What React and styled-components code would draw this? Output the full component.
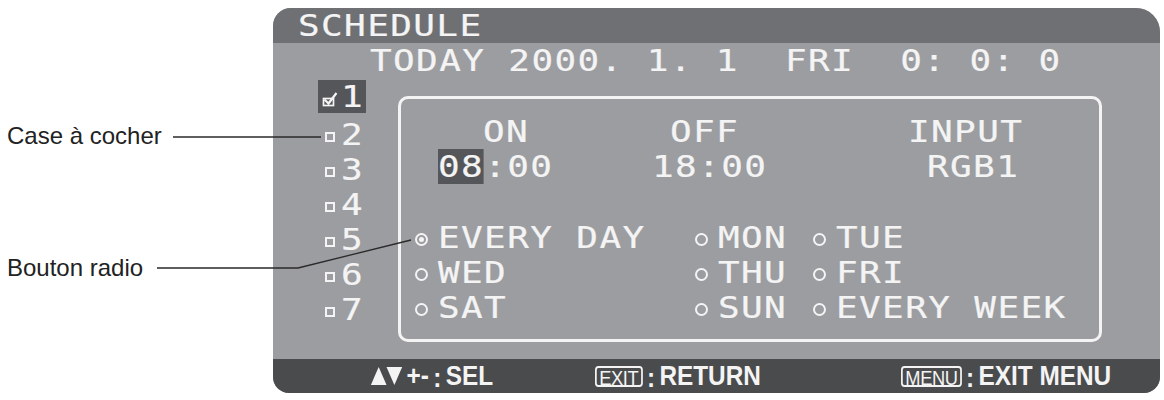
import React from "react";
import styled, { createGlobalStyle } from "styled-components";

const GlobalStyle = createGlobalStyle`
  html, body {
    margin: 0;
    padding: 0;
    background: #ffffff;
  }
  body {
    font-family: "Liberation Sans", Arial, sans-serif;
  }
`;

const osd = {
  header: "#6f7074",
  body: "#9c9da1",
  footer: "#4a4b4d",
  mark: "#55565a",
  ink: "#f4f4f4",
};

const Page = styled.div`
  position: relative;
  display: flex;
  width: 1164px;
  height: 400px;
  padding-top: 8px;
  box-sizing: border-box;
  background: #ffffff;
`;

const Callouts = styled.div`
  width: 273px;
  flex-shrink: 0;
  display: flex;
  flex-direction: column;
  padding-left: 7px;
  box-sizing: border-box;
`;

const Label = styled.div`
  margin-top: ${(p) => p.top}px;
  font-size: 24px;
  line-height: 28px;
  color: #222222;
`;

const Leaders = styled.svg`
  position: absolute;
  left: 0;
  top: 0;
  pointer-events: none;
`;

const Screen = styled.div`
  width: 887px;
  height: 385px;
  display: flex;
  flex-direction: column;
  border-radius: 18px 24px 16px 16px;
  overflow: hidden;
  background: ${osd.body};
  color: ${osd.ink};
  font-family: "DejaVu Sans Mono", "Liberation Mono", monospace;
  font-size: 30px;
`;

/* the OSD font has wide cells: stretch the mono glyphs, keep a 23px pitch */
const Osd = styled.span`
  display: inline-block;
  transform: scaleX(1.2);
  transform-origin: left center;
  letter-spacing: 1.15px;
  white-space: pre;
  -webkit-text-stroke: 0.2px ${osd.ink};
`;

const TitleBar = styled.div`
  height: 35px;
  line-height: 35px;
  padding-left: 25px;
  background: ${osd.header};
`;

const TodayLine = styled.div`
  height: 36px;
  line-height: 36px;
  padding-left: 97px;
`;

const Main = styled.div`
  display: flex;
  height: 280px;
  padding-left: 45px;
`;

const List = styled.div`
  width: 80px;
  display: flex;
  flex-direction: column;
`;

const CheckRow = styled.div`
  height: 35px;
  display: flex;
  align-items: center;
  margin-top: ${(p) => p.gap || 0}px;
`;

const CheckMark = styled.div`
  display: flex;
  align-items: center;
  height: 33px;
  line-height: 33px;
  padding-right: 6px;
  background: ${(p) => (p.active ? osd.mark : "transparent")};
`;

const BoxCell = styled.span`
  width: 23px;
  display: flex;
  justify-content: center;
  align-items: center;
  padding-top: 4px;
`;

const Square = styled.span`
  width: 10px;
  height: 10px;
  box-sizing: border-box;
  border: 2px solid ${osd.ink};
`;

const Frame = styled.div`
  margin-top: 17px;
  width: 704px;
  height: 246px;
  box-sizing: border-box;
  border: 3px solid ${osd.ink};
  border-radius: 10px;
  padding: 15px 0 0 14px;
`;

const TopGrid = styled.div`
  display: grid;
  grid-template-columns: 231px 254px 1fr;
`;

const Col = styled.div`
  display: flex;
  flex-direction: column;
`;

const Line = styled.div`
  height: 35px;
  line-height: 35px;
  padding-left: ${(p) => p.indent || 0}px;
`;

const Mark = styled.span`
  background: ${osd.mark};
`;

const RadioGrid = styled.div`
  margin-top: 36px;
  display: grid;
  grid-template-columns: 280px 118px 1fr;
  grid-auto-rows: 35px;
`;

const RadioItem = styled.div`
  display: flex;
  align-items: center;
  line-height: 35px;
`;

const RadioCell = styled.span`
  width: 23px;
  flex-shrink: 0;
  display: flex;
  align-items: center;
  padding-top: 3px;
`;

const Circle = styled.span`
  position: relative;
  width: 13px;
  height: 13px;
  box-sizing: border-box;
  border: 2px solid ${osd.ink};
  border-radius: 50%;

  &::after {
    content: "";
    display: ${(p) => (p.on ? "block" : "none")};
    position: absolute;
    left: 2px;
    top: 2px;
    width: 5px;
    height: 5px;
    border-radius: 50%;
    background: ${osd.ink};
  }
`;

const Footer = styled.div`
  height: 34px;
  display: grid;
  grid-template-columns: 225px 306px 1fr;
  align-items: center;
  padding-left: 97px;
  background: ${osd.footer};
  font-family: "Liberation Sans", Arial, sans-serif;
`;

const Hint = styled.div`
  display: flex;
  align-items: center;
  transform: scaleX(0.87);
  transform-origin: left center;
  font-size: 28px;
  font-weight: 700;
  line-height: 34px;
  white-space: pre;
`;

const Key = styled.span`
  display: inline-block;
  height: 21px;
  line-height: 19px;
  padding: 0 3px;
  box-sizing: border-box;
  border: 2px solid ${osd.ink};
  border-radius: 4px;
  font-size: 21px;
  font-weight: 400;
  letter-spacing: -0.5px;
`;

const Colon = styled.span`
  margin: 0 5px;
  position: relative;
  top: 2px;
`;

const Arrows = styled.svg`
  margin-right: 4px;
`;

function CheckGlyph() {
  return (
    <svg width="16" height="16" viewBox="0 0 16 16">
      <rect x="1.5" y="7.5" width="10" height="7" fill="none" stroke={osd.ink} strokeWidth="1.7" />
      <path d="M2.5 8.5 L6.5 12.5 L14.5 2" fill="none" stroke={osd.ink} strokeWidth="2.2" />
    </svg>
  );
}

function Radio({ on, label }) {
  return (
    <RadioItem>
      <RadioCell>
        <Circle on={on ? 1 : 0} />
      </RadioCell>
      <Osd>{label}</Osd>
    </RadioItem>
  );
}

const slots = [1, 2, 3, 4, 5, 6, 7];

const repeats = [
  { label: "EVERY DAY", on: true },
  { label: "MON" },
  { label: "TUE" },
  { label: "WED" },
  { label: "THU" },
  { label: "FRI" },
  { label: "SAT" },
  { label: "SUN" },
  { label: "EVERY WEEK" },
];

export default function App() {
  return (
    <Page>
      <GlobalStyle />
      <Callouts>
        <Label top={114}>Case à cocher</Label>
        <Label top={104}>Bouton radio</Label>
      </Callouts>

      <Screen>
        <TitleBar>
          <Osd>SCHEDULE</Osd>
        </TitleBar>
        <TodayLine>
          <Osd>TODAY 2000. 1. 1  FRI  0: 0: 0</Osd>
        </TodayLine>
        <Main>
          <List>
            {slots.map((n) => (
              <CheckRow key={n} gap={n === 2 ? 3 : 0}>
                <CheckMark active={n === 1}>
                  <BoxCell>{n === 1 ? <CheckGlyph /> : <Square />}</BoxCell>
                  <Osd>{n}</Osd>
                </CheckMark>
              </CheckRow>
            ))}
          </List>

          <Frame>
            <TopGrid>
              <Col>
                <Line indent={68}>
                  <Osd>ON</Osd>
                </Line>
                <Line indent={23}>
                  <Osd>
                    <Mark>08</Mark>:00
                  </Osd>
                </Line>
              </Col>
              <Col>
                <Line indent={24}>
                  <Osd>OFF</Osd>
                </Line>
                <Line indent={6}>
                  <Osd>18:00</Osd>
                </Line>
              </Col>
              <Col>
                <Line indent={8}>
                  <Osd>INPUT</Osd>
                </Line>
                <Line indent={27}>
                  <Osd>RGB1</Osd>
                </Line>
              </Col>
            </TopGrid>
            <RadioGrid>
              {repeats.map((r) => (
                <Radio key={r.label} on={r.on} label={r.label} />
              ))}
            </RadioGrid>
          </Frame>
        </Main>

        <Footer>
          <Hint>
            <Arrows width="38" height="20" viewBox="0 0 38 20">
              <path d="M1 19 L10 1 L19 19 Z" fill={osd.ink} />
              <path d="M19 1 L37 1 L28 19 Z" fill={osd.ink} />
            </Arrows>
            +-<Colon>:</Colon>SEL
          </Hint>
          <Hint>
            <Key>EXIT</Key>
            <Colon>:</Colon>RETURN
          </Hint>
          <Hint>
            <Key>MENU</Key>
            <Colon>:</Colon>EXIT MENU
          </Hint>
        </Footer>
      </Screen>

      <Leaders width="1164" height="400" viewBox="0 0 1164 400">
        <polyline points="173,137 321,137" fill="none" stroke="#2a2a2a" strokeWidth="1.3" />
        <polyline points="157,268 298,268 411,240" fill="none" stroke="#2a2a2a" strokeWidth="1.3" />
      </Leaders>
    </Page>
  );
}
